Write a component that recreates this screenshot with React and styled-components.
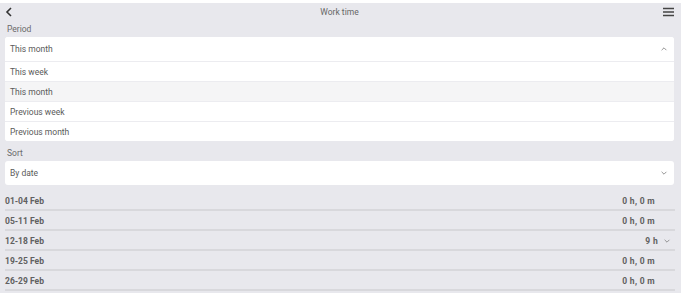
import React from 'react';
import styled, { createGlobalStyle } from 'styled-components';

const Global = createGlobalStyle`
  html, body { margin: 0; padding: 0; background: #fff; }
  body { font-family: Roboto, "Liberation Sans", sans-serif; }
`;

const Page = styled.div`
  margin-top: 3px;
  height: 290px;
  background: #e8e8ed;
  padding: 0 7px 0 5px;
  box-sizing: border-box;
  color: #555;
  font-size: 9px;
`;

const Header = styled.div`
  height: 17px;
  display: grid;
  grid-template-columns: 20px 1fr 20px;
  align-items: center;
`;

const Title = styled.div`
  text-align: center;
  font-size: 8.5px;
  color: #666;
`;

const IconBox = styled.div`
  display: flex;
  justify-content: ${p => (p.$right ? 'flex-end' : 'flex-start')};
  align-items: center;
`;

const Label = styled.div`
  padding: ${p => (p.$gap ? 6 : 3)}px 0 0 2px;
  height: ${p => (p.$gap ? 20 : 17)}px;
  box-sizing: border-box;
  line-height: 13px;
  font-size: 8.5px;
  color: #6a6a6a;
`;

const Card = styled.div`
  background: #fff;
  border-radius: 3px;
  overflow: hidden;
`;

const Option = styled.div`
  display: flex;
  align-items: center;
  justify-content: space-between;
  height: ${p => (p.$head ? 24 : 20)}px;
  padding: 0 6px 0 5px;
  border-top: ${p => (p.$first ? 'none' : '1px solid #ececf0')};
  background: ${p => (p.$active ? '#f5f5f6' : '#fff')};
  font-size: 8.5px;
  color: #5a5a5a;
  box-sizing: border-box;
`;

const List = styled.div`
  margin-top: 6px;
  margin-right: -1px;
`;

const Row = styled.div`
  display: flex;
  align-items: center;
  justify-content: space-between;
  height: 20px;
  padding-top: 1px;
  border-bottom: 2px solid #d8d8dc;
  box-sizing: border-box;
  font-size: 8.5px;
  font-weight: 700;
  color: #606060;
`;

const Value = styled.div`
  display: flex;
  align-items: center;
  gap: 5px;
  padding-right: ${p => (p.$chev ? 4 : 20)}px;
  letter-spacing: 0.3px;
`;

const Chevron = ({ up, size = 8 }) => (
  <svg width={size} height={size} viewBox="0 0 10 10">
    <path d={up ? 'M2 6.5 L5 3.5 L8 6.5' : 'M2 3.5 L5 6.5 L8 3.5'} fill="none" stroke="#888" strokeWidth="1.1" />
  </svg>
);

const weeks = [
  { d: '01-04 Feb', v: '0 h, 0 m' },
  { d: '05-11 Feb', v: '0 h, 0 m' },
  { d: '12-18 Feb', v: '9 h', chev: true },
  { d: '19-25 Feb', v: '0 h, 0 m' },
  { d: '26-29 Feb', v: '0 h, 0 m' },
];

export default function App() {
  return (
    <>
      <Global />
      <Page>
        <Header>
          <IconBox>
            <svg width="8" height="10" viewBox="0 0 8 10">
              <path d="M6 1 L2 5 L6 9" fill="none" stroke="#333" strokeWidth="1.6" />
            </svg>
          </IconBox>
          <Title>Work time</Title>
          <IconBox $right>
            <svg width="11" height="10" viewBox="0 0 11 10">
              <path d="M0 1.5 H11 M0 5 H11 M0 8.5 H11" stroke="#444" strokeWidth="1.4" />
            </svg>
          </IconBox>
        </Header>
        <Label>Period</Label>
        <Card>
          <Option $head $first>
            This month <Chevron up />
          </Option>
          <Option>This week</Option>
          <Option $active>This month</Option>
          <Option>Previous week</Option>
          <Option>Previous month</Option>
        </Card>
        <Label $gap>Sort</Label>
        <Card>
          <Option $head $first>
            By date <Chevron />
          </Option>
        </Card>
        <List>
          {weeks.map(w => (
            <Row key={w.d}>
              <span>{w.d}</span>
              <Value $chev={w.chev}>
                {w.v}
                {w.chev && <Chevron />}
              </Value>
            </Row>
          ))}
        </List>
      </Page>
    </>
  );
}
